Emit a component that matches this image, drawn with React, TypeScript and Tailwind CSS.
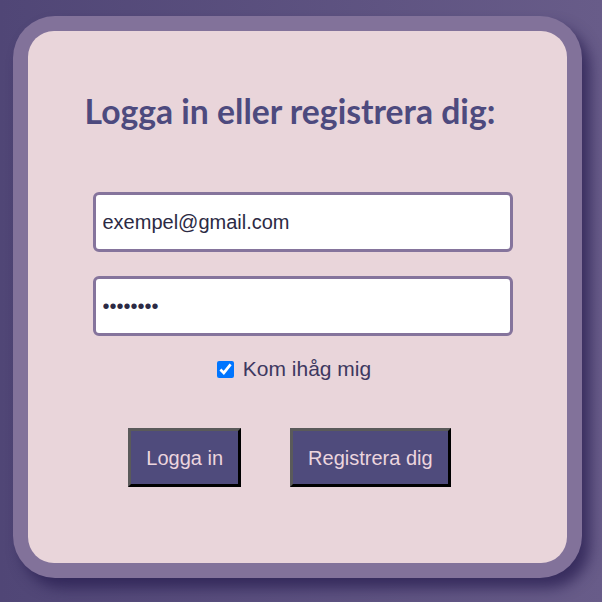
import React from "react";

export default function App() {
  return (
    <div className="w-[602px] h-[602px] overflow-hidden bg-gradient-to-r from-[#504676] to-[#685c89] pt-[16px] pl-[13px]">
      <div className="w-[569px] h-[562px] rounded-[42px] bg-[#82729a] p-[15px] shadow-[8px_10px_14px_rgba(40,30,80,0.75)]">
        <div className="w-full h-full rounded-[26px] bg-[#e9d5da] flex flex-col items-center" style={{ fontFamily: '"Liberation Sans", Arial, sans-serif' }}>
          <h1 className="mt-[59px] mr-[15px] text-[#4d4a7e] font-bold text-[33.7px] leading-[42px]" style={{ fontFamily: 'Lato, "Open Sans", sans-serif' }}>
            Logga in eller registrera dig:
          </h1>
          <input
            type="text"
            defaultValue="exempel@gmail.com"
            className="mt-[60px] ml-[10px] w-[420px] h-[60px] bg-white border-[3px] border-[#85749c] rounded-[6px] px-[7px] text-[20px] text-[#2c2a44] outline-none"
          />
          <input
            type="password"
            defaultValue="12345678"
            className="mt-[24px] ml-[10px] w-[420px] h-[60px] bg-white border-[3px] border-[#85749c] rounded-[6px] px-[7px] text-[20px] text-[#2c2a44] outline-none"
          />
          <label className="mt-[21px] mr-[7px] flex items-center gap-[9px] text-[21px] leading-[24px] text-[#3d3860]">
            <input type="checkbox" defaultChecked className="w-[17px] h-[17px] m-0" />
            Kom ihåg mig
          </label>
          <div className="mt-[47px] mr-[16px] flex gap-[49px]">
            <button className="h-[59px] px-[15px] bg-[#4f4b7c] text-[#ecd5de] text-[20px] border-[3px] border-t-[#5a5a5a] border-l-[#5a5a5a] border-b-black border-r-black">
              Logga in
            </button>
            <button className="h-[59px] px-[15px] bg-[#4f4b7c] text-[#ecd5de] text-[20px] border-[3px] border-t-[#5a5a5a] border-l-[#5a5a5a] border-b-black border-r-black">
              Registrera dig
            </button>
          </div>
        </div>
      </div>
    </div>
  );
}
